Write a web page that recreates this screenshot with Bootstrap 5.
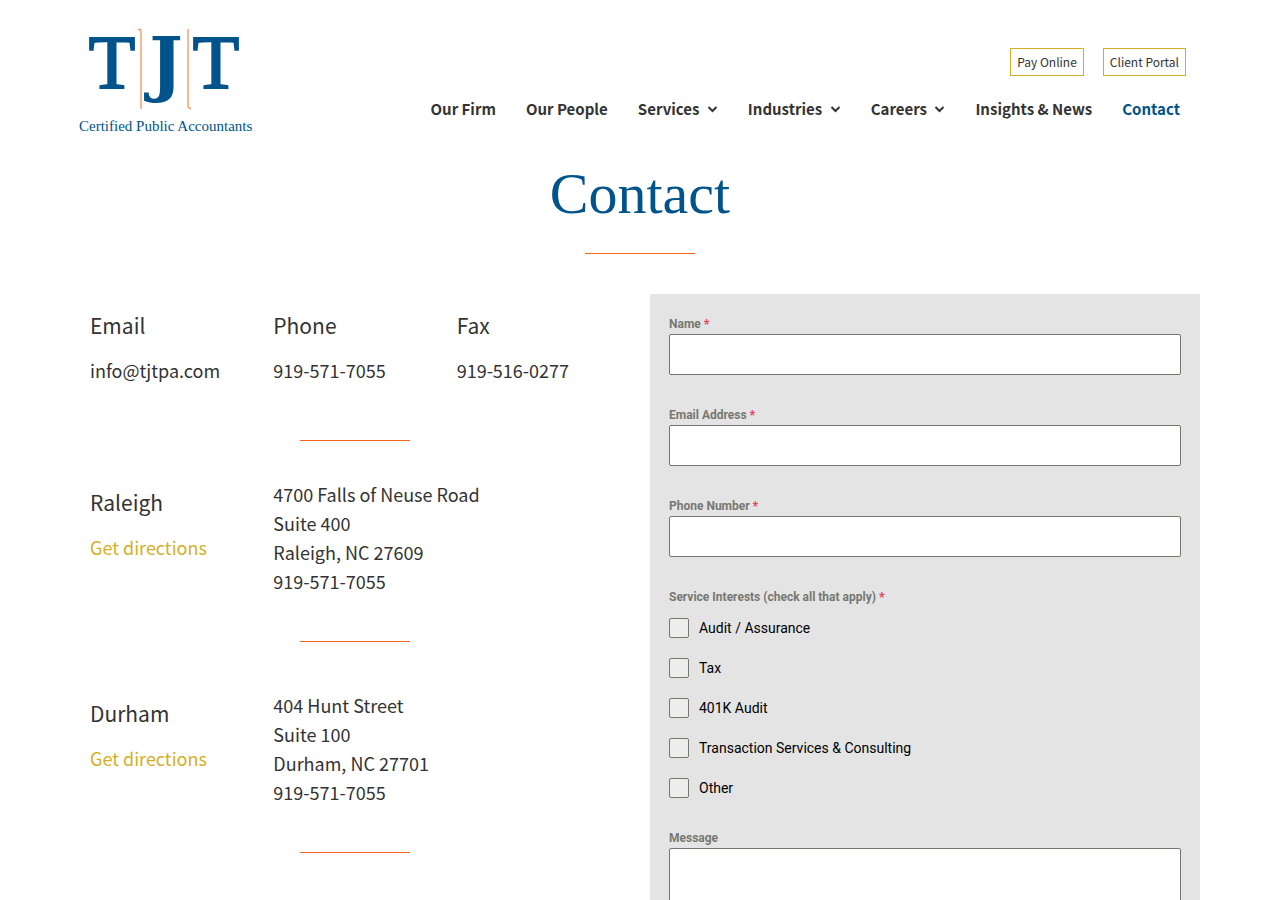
<!DOCTYPE html>
<html lang="en">
<head>
<meta charset="utf-8">
<meta name="viewport" content="width=device-width, initial-scale=1">
<title>Contact - TJT Certified Public Accountants</title>
<link rel="stylesheet" href="https://cdn.jsdelivr.net/npm/bootstrap@5.3.0/dist/css/bootstrap.min.css">
<style>
:root { --navy: #00538b; --ink: #333; --gold: #d4af26; --flame: #f9661b; }
body { font-family: "Noto Sans CJK SC", sans-serif; font-size: 18px; line-height: 29px; color: var(--ink); background: #fff; }
.page-wrap { max-width: 1140px; padding-left: 10px; padding-right: 10px; }
.brand-mark { width: 180px; height: 112px; margin-left: -5px; overflow: visible; }
.top-links { column-gap: 19px; margin-right: 14px; }
.btn-outline-gold { border: 1px solid var(--gold); border-radius: 0; color: var(--ink); font-size: 12px; line-height: 18px; padding: 4px 6px; }
.btn-outline-gold:hover { background: var(--gold); color: #fff; }
.main-menu { column-gap: 30px; margin-top: 21px; margin-right: 20px; }
.main-menu .nav-link { font-size: 15px; font-weight: 700; line-height: 24px; color: var(--ink); padding: 0; }
.main-menu .nav-link.active { color: var(--navy); }
.page-title { font-family: "Liberation Serif", serif; font-size: 58px; line-height: 60px; color: var(--navy); margin: 28px 0 29px; }
.rule { height: 1px; width: 110px; background: var(--flame); opacity: 1; border: 0; margin: 0 auto; }
.two-up { display: grid; grid-template-columns: repeat(auto-fit, minmax(min(100%, 400px), 1fr)); column-gap: 20px; padding-top: 40px; }
.info-col { padding: 0 10px; }
.info-head { font-size: 21px; line-height: 32px; font-weight: 400; margin: 0 0 15px; }
.contact-row { padding: 15px 0 55px; }
.office { padding: 39px 0 45px; }
.office-last { padding-top: 49px; }
.office-name { padding-top: 6px; }
.gold-link { color: var(--gold); text-decoration: none; }
.contact-form { background: #e4e4e4; padding: 20px 19px; row-gap: 30px; font-family: Roboto, sans-serif; }
.field-label { display: block; float: none; font-size: 12px; line-height: 20px; font-weight: 700; color: #777771; margin: 0; }
.field-label span { color: #e8415f; font-weight: 900; }
.field-box { border: 1px solid #777771; border-radius: 2px; height: 41px; }
textarea.field-box { height: 140px; }
.check-list { display: grid; row-gap: 20px; padding-top: 11px; }
.check-list > div { column-gap: 10px; }
.contact-form .form-check-input { width: 20px; height: 20px; margin: 0; border: 1px solid #777771; border-radius: 2px; background-color: #ededed; }
.form-check-label { font-size: 14px; line-height: 20px; color: #000; }
</style>
</head>
<body>
<header class="container page-wrap d-flex justify-content-between pt-4">
  <a href="#" aria-label="TJT Certified Public Accountants">
    <svg class="brand-mark d-block" viewBox="75 24 180 112" font-family="Liberation Serif, serif" fill="#00538b">
      <g text-anchor="middle">
        <text x="112" y="88" font-size="76" stroke="#00538b" stroke-width="2">T</text>
        <text x="166" y="88" font-size="71" font-weight="700" font-family="DejaVu Serif, serif">J</text>
        <text x="216" y="88" font-size="76" stroke="#00538b" stroke-width="2">T</text>
      </g>
      <path d="M138 29.500h2q1 0 1 2V109M188 29V106q0 2.500 3 2.500" fill="none" stroke="#f9935f" stroke-width="1.300"/>
      <text x="79" y="131" font-size="15">Certified Public Accountants</text>
    </svg>
  </a>
  <div class="d-flex flex-column align-items-end pt-4">
    <div class="d-flex top-links">
      <a class="btn btn-outline-gold" href="#">Pay Online</a>
      <a class="btn btn-outline-gold" href="#">Client Portal</a>
    </div>
    <nav>
      <ul class="nav main-menu">
        <li><a class="nav-link" href="#">Our Firm</a></li>
        <li><a class="nav-link" href="#">Our People</a></li>
        <li><a class="nav-link" href="#">Services <svg class="ms-1" width="11" height="11" viewBox="0 0 11 11"><path d="M1.500 2l4 4 4-4" fill="none" stroke="#333" stroke-width="2"/></svg></a></li>
        <li><a class="nav-link" href="#">Industries <svg class="ms-1" width="11" height="11" viewBox="0 0 11 11"><path d="M1.500 2l4 4 4-4" fill="none" stroke="#333" stroke-width="2"/></svg></a></li>
        <li><a class="nav-link" href="#">Careers <svg class="ms-1" width="11" height="11" viewBox="0 0 11 11"><path d="M1.500 2l4 4 4-4" fill="none" stroke="#333" stroke-width="2"/></svg></a></li>
        <li><a class="nav-link" href="#">Insights &amp; News</a></li>
        <li><a class="nav-link active" aria-current="page" href="#">Contact</a></li>
      </ul>
    </nav>
  </div>
</header>
<main class="container page-wrap">
  <h1 class="page-title text-center fw-normal">Contact</h1>
  <hr class="rule">
  <div class="two-up">
    <div>
      <section class="row g-0 contact-row">
        <div class="col-4 info-col"><h2 class="info-head">Email</h2><div>info@tjtpa.com</div></div>
        <div class="col-4 info-col"><h2 class="info-head">Phone</h2><div>919-571-7055</div></div>
        <div class="col-4 info-col"><h2 class="info-head">Fax</h2><div>919-516-0277</div></div>
      </section>
      <hr class="rule">
      <section class="row g-0 office">
        <div class="col-4 info-col office-name"><h2 class="info-head">Raleigh</h2><a class="gold-link" href="#">Get directions</a></div>
        <address class="col-8 info-col mb-0">4700 Falls of Neuse Road<br>Suite 400<br>Raleigh, NC 27609<br>919-571-7055</address>
      </section>
      <hr class="rule">
      <section class="row g-0 office office-last">
        <div class="col-4 info-col office-name"><h2 class="info-head">Durham</h2><a class="gold-link" href="#">Get directions</a></div>
        <address class="col-8 info-col mb-0">404 Hunt Street<br>Suite 100<br>Durham, NC 27701<br>919-571-7055</address>
      </section>
      <hr class="rule">
    </div>
    <form class="contact-form d-flex flex-column">
      <div><label class="field-label" for="name">Name <span>*</span></label><input class="form-control field-box" id="name" type="text" required></div>
      <div><label class="field-label" for="email">Email Address <span>*</span></label><input class="form-control field-box" id="email" type="email" required></div>
      <div><label class="field-label" for="phone">Phone Number <span>*</span></label><input class="form-control field-box" id="phone" type="tel" required></div>
      <fieldset>
        <legend class="field-label">Service Interests (check all that apply) <span>*</span></legend>
        <div class="check-list">
          <div class="d-flex"><input class="form-check-input" type="checkbox" id="audit"><label class="form-check-label" for="audit">Audit / Assurance</label></div>
          <div class="d-flex"><input class="form-check-input" type="checkbox" id="tax"><label class="form-check-label" for="tax">Tax</label></div>
          <div class="d-flex"><input class="form-check-input" type="checkbox" id="k401"><label class="form-check-label" for="k401">401K Audit</label></div>
          <div class="d-flex"><input class="form-check-input" type="checkbox" id="consulting"><label class="form-check-label" for="consulting">Transaction Services &amp; Consulting</label></div>
          <div class="d-flex"><input class="form-check-input" type="checkbox" id="other"><label class="form-check-label" for="other">Other</label></div>
        </div>
      </fieldset>
      <div><label class="field-label" for="message">Message</label><textarea class="form-control field-box" id="message"></textarea></div>
    </form>
  </div>
</main>
<script src="https://cdn.jsdelivr.net/npm/bootstrap@5.3.0/dist/js/bootstrap.bundle.min.js"></script>
</body>
</html>
